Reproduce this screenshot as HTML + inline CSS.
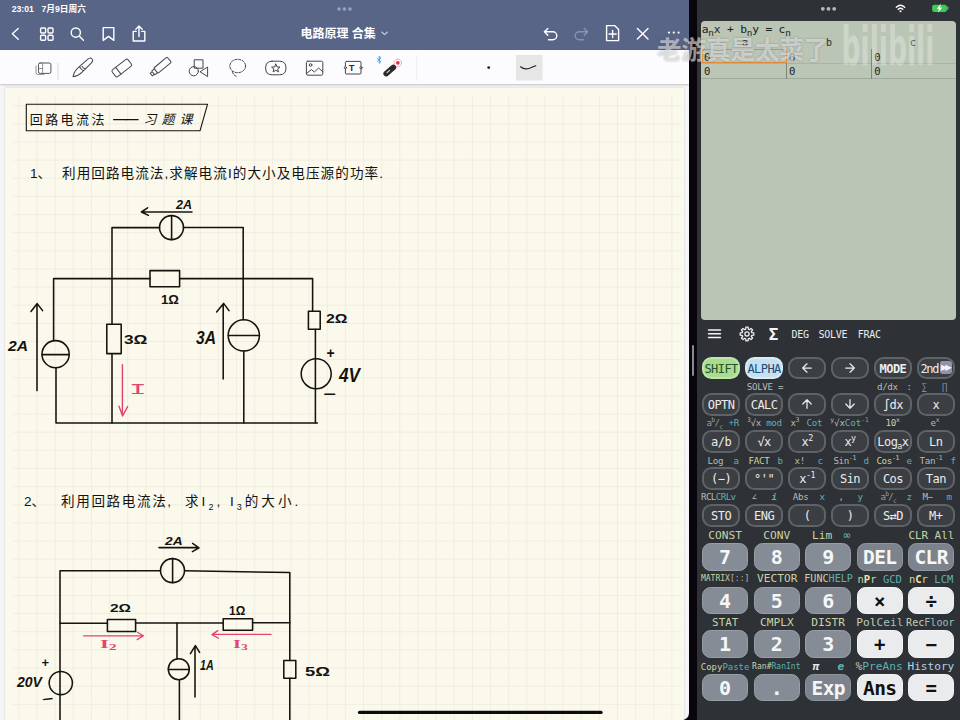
<!DOCTYPE html>
<html lang="zh"><head><meta charset="utf-8"><title>电路原理 合集</title>
<style>
*{box-sizing:border-box;margin:0;padding:0}
html,body{width:960px;height:720px;overflow:hidden;background:#08060c}
body{position:relative;font-family:"Liberation Sans","Noto Sans CJK SC",sans-serif}
.abs{position:absolute}
#left{position:absolute;left:0;top:0;width:689.3px;height:720px;background:#f6f5f8;overflow:hidden;border-bottom-right-radius:7px}
#hdr{position:absolute;left:0;top:0;width:100%;height:50.4px;background:#586587}
#tool{position:absolute;left:0;top:50.4px;width:100%;height:34.1px;background:#fcfbfd;box-shadow:0 1px 2px rgba(0,0,0,.22)}
#page{position:absolute;left:5px;top:88px;width:679px;height:640px;background:#fbf9ec;box-shadow:0 0 2px rgba(0,0,0,.18)}
#grid{position:absolute;left:8px;top:8px;width:668px;height:632px;
 background-image:linear-gradient(to right,#e7e4d6 1px,transparent 1px),linear-gradient(to bottom,#e7e4d6 1px,transparent 1px);
 background-size:18.15px 18.15px;background-position:5.4px 9.2px;opacity:.5}
.st{position:absolute;color:#fff;font-size:8.7px;font-weight:bold;line-height:10px;white-space:nowrap}
.hw{position:absolute;white-space:nowrap;color:#15130f;font-weight:400;font-family:"Liberation Sans","Noto Sans CJK SC",sans-serif;line-height:1}
#calc{position:absolute;left:696.5px;top:0;width:263.5px;height:720px;background:#2e3135;overflow:hidden;font-family:"DejaVu Sans Mono","Liberation Mono",monospace}
#disp{position:absolute;left:4px;top:21px;width:255px;height:299px;background:#bac5b5;border-radius:4px;overflow:hidden}
.k{position:absolute;height:22.5px;width:37.6px;border-radius:9.4px;background:#3b3f43;border:2px solid #5e6367;color:#ececec;
 font-size:12px;line-height:18.5px;padding-top:1px;text-align:center;letter-spacing:-.55px;white-space:nowrap}
.k sup,.k sub,.lb sup,.lb sub{font-size:70%;line-height:0}
.n{position:absolute;height:27.6px;width:46.2px;border-radius:8.6px;background:#858c96;border:1.5px solid #979ea7;color:#f6f6f6;
 font-size:20px;font-weight:bold;line-height:25px;padding-top:1.2px;text-align:center;white-space:nowrap}
.n.op{background:#e9ebec;border-color:#f3f4f5;color:#111}
.n.dk{background:#7c838c;border-color:#8f969e}
.lb{position:absolute;font-size:9.2px;line-height:10px;letter-spacing:-.35px;white-space:nowrap;color:#b9bcb8}
.lb2{position:absolute;font-size:10.2px;line-height:11px;letter-spacing:-.45px;white-space:nowrap;color:#c9d4a6}
.y{color:#c9d4a6}.c{color:#5fb0b3}.g{color:#b4b8b6}
</style></head>
<body>
<div id="left">
<div id="page"><div id="grid"></div></div>
<div id="hdr">
<div class="st" style="left:11.7px;top:4px">23:01</div><div class="st" style="left:41.5px;top:4px">7月9日周六</div>
<div class="abs" style="left:337px;top:6.8px;width:16px;height:4px"><svg style="display:block" width="16" height="4" viewBox="0 0 16 4"><circle cx="2" cy="2" r="1.8" fill="#98a1bd"/><circle cx="7.5" cy="2" r="1.8" fill="#98a1bd"/><circle cx="13" cy="2" r="1.8" fill="#98a1bd"/></svg></div>
<div class="abs" style="left:300.5px;top:26.1px;color:#fff;font-weight:bold;font-size:12px;line-height:16px;white-space:nowrap">电路原理 合集</div>
<svg class="abs" style="left:0;top:0" width="690" height="50" viewBox="0 0 690 50" fill="none" stroke="#fff" stroke-width="1.4" stroke-linecap="round" stroke-linejoin="round">
<path d="M18.2 28.4 L12.4 33.8 L18.2 39.2"/>
<rect x="40.6" y="28" width="5" height="5" rx="1"/><rect x="48" y="28" width="5" height="5" rx="1"/><rect x="40.6" y="35.2" width="5" height="5" rx="1"/><rect x="48" y="35.2" width="5" height="5" rx="1"/>
<circle cx="75.8" cy="32.6" r="4.6"/><path d="M79.2 36 L83.4 40.2"/>
<path d="M103.2 27.6 H113.8 V40.4 L108.5 36.4 L103.2 40.4 Z"/>
<path d="M136.2 31.4 H133.2 V41 H144.8 V31.4 H141.8 M139 36.5 V26.2 M135.8 29.2 L139 26 L142.2 29.2"/>
<path d="M381.8 32 L384.6 34.6 L387.4 32" stroke="#c9cfe0" stroke-width="1.1"/>
<path d="M547.8 28.4 L544.4 31.8 L547.8 35.2 M544.6 31.8 H552.8 A4 4 0 0 1 552.8 39.8 H548.5"/>
<path d="M584.2 28.4 L587.6 31.8 L584.2 35.2 M587.4 31.8 H579.2 A4 4 0 0 0 579.2 39.8 H583.5" stroke="#8992b2"/>
<path d="M606.6 25.6 H614.6 L618.6 29.6 V40.6 H606.6 Z M612.6 30.4 V37.6 M609 34 H616.2"/>
<path d="M637.4 28.4 L648 39 M648 28.4 L637.4 39"/>
<circle cx="669" cy="32.6" r="1.1" fill="#fff" stroke="none"/><circle cx="673.8" cy="32.6" r="1.1" fill="#fff" stroke="none"/><circle cx="678.6" cy="32.6" r="1.1" fill="#fff" stroke="none"/>
</svg>
</div>
<div id="tool">
<svg class="abs" style="left:0;top:0" width="690" height="35" viewBox="0 50 690 35" fill="none" stroke="#474747" stroke-width="1" stroke-linecap="round" stroke-linejoin="round">
<rect x="516" y="55" width="26.5" height="25.5" fill="#e6e6e6" stroke="none"/>
<path d="M58 63.5 V79" stroke="#dcdcdc"/><path d="M416.7 56 V80" stroke="#ececec"/>
<rect x="38.5" y="63" width="12.4" height="10.4" rx="1.6" stroke="#555"/><path d="M36 66 V72.5 Q36 74.4 38 74.4 H44 M42.6 63 V73.4 M38.5 68.5 H42.6" stroke="#777" stroke-width=".8"/>
<g transform="translate(82.5 67.7) rotate(-43.5)"><path d="M-13 0 Q-9 -3.2 -3 -3 L9.5 -2.6 Q13 -2.6 13 0 Q13 2.6 9.5 2.6 L-3 3 Q-9 3.2 -13 0 Z M-1.4 -3 Q-2.4 0 -1.4 3 M1 -2.95 Q0 0 1 2.95"/></g>
<g transform="translate(121.8 68) rotate(-38)"><rect x="-10" y="-4.3" width="20" height="8.6" rx="1.8"/><path d="M-4.4 -4.3 V4.3"/></g>
<g transform="translate(162 65.6) rotate(-40)"><rect x="-8" y="-3.4" width="17.4" height="6.8" rx="1"/><path d="M-8 -2.5 H-11.4 V2.5 H-8 M-11.4 -1.7 H-14 V1.7 H-11.4"/></g>
<rect x="194.6" y="59.8" width="8.4" height="8.4"/><circle cx="193.8" cy="71.2" r="4.6"/><path d="M207.6 67.4 V76.6 L200.4 72 Z"/>
<ellipse cx="237.7" cy="66" rx="7.9" ry="6.7" stroke-dasharray="2.4 1.5"/><path d="M232.4 71.6 Q232.6 74.6 237.4 77" stroke-dasharray="2.4 1.5"/>
<path d="M272 61.2 H279.6 Q286 61.2 286 68 Q286 74.8 279.6 74.8 H272 Q265.6 74.8 265.6 68 Q265.6 61.2 272 61.2 Z" /><path transform="translate(0 .9)" d="M275.8 63.2 L277 66 L280 66.2 L277.7 68.1 L278.5 71 L275.8 69.4 L273.1 71 L273.9 68.1 L271.6 66.2 L274.6 66 Z"/>
<rect x="306.4" y="61.2" width="16.4" height="14" rx="1.4"/><circle cx="310.6" cy="65" r="1.3"/><path d="M306.6 73.4 L311.4 69.6 L314.4 72 L318.6 68 L322.6 71.6"/>
<rect x="345.4" y="61.4" width="15.6" height="12.6" rx="1"/><circle cx="345.4" cy="67.7" r="1.1" fill="#fdfdfd"/><circle cx="361" cy="67.7" r="1.1" fill="#fdfdfd"/>
<circle cx="488.7" cy="67.6" r="1.4" fill="#222" stroke="none"/>
<path d="M520.6 66.8 Q524.6 70 529.6 68.2 Q533.6 66.6 535.8 65.8" stroke="#222" stroke-width="1.2"/>
<path d="M386.2 73.6 L393.4 67.4" stroke="#2a2a2a" stroke-width="5.6"/>
<path d="M387 72.6 L389.6 70.4" stroke="#ddd" stroke-width="1.1"/>
<circle cx="397.8" cy="62.8" r="1.9" fill="#e8304a" stroke="none"/><circle cx="397.8" cy="62.8" r="3.7" stroke="#f08a98" stroke-width=".9" stroke-dasharray="1.2 1.4"/>
<path d="M377.4 58.4 L381 61.6 L379.2 63.4 V56 L381 57.8 L377.4 61.2" stroke="#2a8cf0" stroke-width=".8"/>
</svg>
<div class="abs" style="left:348.8px;top:12.6px;font-size:9.5px;font-weight:bold;line-height:10px;color:#333">T</div>
</div>
<div class="hw" style="left:29.8px;top:112.6px;font-size:13px;letter-spacing:2.4px">回路电流法</div>
<div class="hw" style="left:113px;top:112.4px;font-size:13px;letter-spacing:-1px;font-weight:bold;transform:scaleX(1.02);transform-origin:left">——</div>
<div class="hw" style="left:143.6px;top:112.6px;font-size:13px;letter-spacing:5px;font-style:italic">习题课</div>
<div class="hw" style="left:30px;top:166.6px;font-size:13.6px;">1、</div>
<div class="hw" style="left:62px;top:166.6px;font-size:13.6px;letter-spacing:1.05px">利用回路电流法,求解电流I的大小及电压源的功率.</div>
<div class="hw" style="left:24px;top:494.6px;font-size:13.6px;">2、</div>
<div class="hw" style="left:61px;top:494.6px;font-size:13.6px;letter-spacing:1.6px">利用回路电流法,</div>
<div class="hw" style="left:185px;top:494.6px;font-size:13.6px;letter-spacing:3px">求I<sub style="font-size:9px">2</sub>, I<sub style="font-size:9px">3</sub>的大小.</div>
<div class="hw" style="left:176px;top:198.0px;font-size:13.0px;font-weight:bold;transform:scaleX(0.961);transform-origin:left top;font-style:italic;">2A</div>
<div class="hw" style="left:7.5px;top:338.2px;font-size:15.1px;font-weight:bold;transform:scaleX(1.037);transform-origin:left top;font-style:italic;">2A</div>
<div class="hw" style="left:161px;top:293.5px;font-size:12.3px;font-weight:bold;transform:scaleX(1.074);transform-origin:left top;">1Ω</div>
<div class="hw" style="left:124px;top:333.4px;font-size:13.7px;font-weight:bold;transform:scaleX(1.262);transform-origin:left top;">3Ω</div>
<div class="hw" style="left:196px;top:329.9px;font-size:17.8px;font-weight:bold;transform:scaleX(0.878);transform-origin:left top;font-style:italic;">3A</div>
<div class="hw" style="left:326px;top:312.4px;font-size:13.7px;font-weight:bold;transform:scaleX(1.154);transform-origin:left top;">2Ω</div>
<div class="hw" style="left:339px;top:365.7px;font-size:19.9px;font-weight:bold;transform:scaleX(0.863);transform-origin:left top;font-style:italic;">4V</div>
<div class="hw" style="left:165px;top:536.2px;font-size:11.0px;font-weight:bold;transform:scaleX(1.248);transform-origin:left top;font-style:italic;">2A</div>
<div class="hw" style="left:110px;top:603.2px;font-size:11.0px;font-weight:bold;transform:scaleX(1.409);transform-origin:left top;">2Ω</div>
<div class="hw" style="left:228.7px;top:604.5px;font-size:12.3px;font-weight:bold;transform:scaleX(0.972);transform-origin:left top;">1Ω</div>
<div class="hw" style="left:200px;top:657.2px;font-size:15.1px;font-weight:bold;transform:scaleX(0.710);transform-origin:left top;font-style:italic;">1A</div>
<div class="hw" style="left:305px;top:664.5px;font-size:13.0px;font-weight:bold;transform:scaleX(1.413);transform-origin:left top;">5Ω</div>
<div class="hw" style="left:16.7px;top:674.8px;font-size:14.4px;font-weight:bold;transform:scaleX(0.976);transform-origin:left top;font-style:italic;">20V</div>
<div class="hw" style="left:326.6px;top:345.6px;font-size:14px;font-weight:bold">+</div>
<div class="hw" style="left:323px;top:386.6px;font-size:14px;font-weight:bold;transform:scaleX(1.55);transform-origin:left">−</div>
<div class="hw" style="left:41.4px;top:656.4px;font-size:13px;font-weight:bold">+</div>
<div class="hw" style="left:41.7px;top:692.6px;font-size:13px;font-weight:bold;transform:scaleX(1.5) rotate(-10deg);transform-origin:left">−</div>
<div class="hw" style="left:129.4px;top:382.6px;font-size:15.5px;color:#e2446d;font-family:'Liberation Mono',monospace;font-weight:normal;transform:scaleX(1.9);transform-origin:left">I</div>
<div class="hw" style="left:99.5px;top:637.6px;font-size:12px;color:#e2446d;font-family:'Liberation Serif',serif;font-weight:bold;transform:scaleX(1.9);transform-origin:left">I<sub style="font-size:8px;vertical-align:-2px">2</sub></div>
<div class="hw" style="left:232.5px;top:637.6px;font-size:12px;color:#e2446d;font-family:'Liberation Serif',serif;font-weight:bold;transform:scaleX(1.7);transform-origin:left">I<sub style="font-size:8px;vertical-align:-2px">3</sub></div>
<svg class="abs" style="left:0;top:0" width="690" height="720" viewBox="0 0 690 720" fill="none" stroke="#16130f" stroke-width="1.55" stroke-linecap="round" stroke-linejoin="round">
<path d="M26.3 104.3 H207.5 L200 130.8 H26.3 Z" stroke-width="1.1"/>
<!-- circuit 1 -->
<path d="M112 423 V227.6 H159.6 M183.4 227.4 H243.2 V319.6 M243.8 351 V423"/>
<circle cx="171.5" cy="227.6" r="12"/><path d="M171.6 215.6 V239.6"/>
<path d="M53.6 340.4 V278.6 H150 M179.6 278.6 H312.6 V311.2 M315.4 329.2 V423.2 M56 367.8 V423 H317.4"/>
<rect x="150" y="270.6" width="29.6" height="16.2"/>
<rect x="106.8" y="324.2" width="14.4" height="29.4" fill="#fbf9ec"/>
<rect x="308.4" y="311.2" width="11.8" height="18" />
<circle cx="55.6" cy="354.2" r="13.6"/><path d="M42 354.6 H69.2"/>
<circle cx="243.8" cy="335.4" r="15.6"/><path d="M228.4 335.4 H259.4"/>
<circle cx="316.2" cy="373.8" r="15"/>
<path d="M37 390.6 V304 M31 311.4 L37.2 303.6 L42.6 310.6"/>
<path d="M223.2 379 V304 M216.6 312 L223.6 303.4 L229 310.6"/>
<path d="M192 212 H142 M147.6 207.8 L141.4 212 L148.4 215.4"/>
<path d="M122.4 364.6 V415.4 M119 406.2 L122.6 416 L127.6 406.6" stroke="#e2446d" stroke-width="1.4"/>
<!-- circuit 2 -->
<path d="M60 720 V570.8 H160.4 M184.6 570.8 L289.8 572.6 V660.4 M289.8 678.2 V720"/>
<circle cx="172.5" cy="570.6" r="12"/><path d="M172.6 558.6 V582.6"/>
<path d="M60 623.2 H107.4 M135.6 623 H223.2 M252.6 622.8 H290"/>
<rect x="107.4" y="619.4" width="28.2" height="12"/>
<rect x="223.2" y="618.8" width="29.4" height="11.4"/>
<rect x="283.8" y="660.4" width="12" height="17.8"/>
<path d="M177 623 V658.8 M179.4 679.8 V720"/>
<circle cx="178.8" cy="669.2" r="10.5"/><path d="M168.4 669.4 H189.2"/>
<circle cx="60.8" cy="683" r="11.6"/>
<path d="M195 697 V646.4 M190.4 653.6 L195.4 645.6 L199.6 652.4"/>
<path d="M159 547.6 H198.6 M192.6 543.4 L199 547.8 L192.4 551.6"/>
<path d="M83.6 635.8 H143 M137.4 632.2 L143.4 635.8 L137.2 639.6" stroke="#e2446d" stroke-width="1.3"/>
<path d="M271 634.4 H212.4 M217.8 630.6 L212 634.6 L218.4 638.2" stroke="#e2446d" stroke-width="1.3"/>
<path d="M359.6 712.4 H601" stroke="#0b0b0b" stroke-width="3.4"/>
</svg>
</div>
<div class="abs" style="left:691.6px;top:345px;width:2.6px;height:31px;border-radius:2px;background:#8a8a8e"></div>
<div id="calc">
<svg class="abs" style="left:0;top:0" width="264" height="20" viewBox="696.5 0 264 20">
<circle cx="822.3" cy="8.8" r="1.9" fill="#b4b7bd"/><circle cx="828" cy="8.8" r="1.9" fill="#b4b7bd"/><circle cx="833.7" cy="8.8" r="1.9" fill="#b4b7bd"/>
<g fill="none" stroke="#fff" stroke-width="1.35" stroke-linecap="round"><path d="M895.8 7.2 Q900 3.4 904.2 7.2"/><path d="M897.7 9.3 Q900 7.3 902.3 9.3"/></g><circle cx="900" cy="11.2" r="1" fill="#fff"/>
<rect x="931.6" y="4.8" width="14.8" height="7.2" rx="2.2" fill="#3ec95b"/><rect x="946.6" y="6.6" width="1.3" height="3.2" rx=".6" fill="#8d9094"/>
<path d="M940.4 3.8 L936.2 8.8 H938.6 L937.4 12.8 L941.8 7.6 H939.4 Z" fill="#fff"/>
</svg>
<div id="disp">
<div class="abs" style="left:0;top:28px;width:255px;height:14.2px;background:#bbc5b6"></div><div class="abs" style="left:0;top:42.2px;width:255px;height:15.4px;background:#bcc6b6;border-bottom:1px solid #a0aa9c;border-top:1px solid #aab4a5"></div>
<div class="abs" style="left:85.4px;top:28px;width:1px;height:30px;background:#7b8578"></div><div class="abs" style="left:170.6px;top:28px;width:1px;height:30px;background:#7b8578"></div>
<div class="abs" style="left:1.8px;top:28px;width:84.4px;height:14.4px;border:1.4px solid #e28b36"></div>
<div class="abs" style="left:1.2px;top:2px;font-size:11.3px;line-height:14px;color:#1d211c;white-space:nowrap;letter-spacing:-.2px">a<sub style="font-size:9.4px;line-height:0;vertical-align:-2.6px">n</sub>x + b<sub style="font-size:9.4px;line-height:0;vertical-align:-2.6px">n</sub>y = c<sub style="font-size:9.4px;line-height:0;vertical-align:-2.6px">n</sub></div>
<div class="abs" style="left:41.4px;top:16.4px;font-size:10px;line-height:11px;color:#2a2f29">a</div><div class="abs" style="left:125.6px;top:16.4px;font-size:10px;line-height:11px;color:#2a2f29">b</div><div class="abs" style="left:209.2px;top:16.4px;font-size:10px;line-height:11px;color:#2a2f29">c</div>
<div class="abs" style="left:3.6px;top:29.6px;font-size:10.6px;line-height:12px;color:#1d211c">0</div><div class="abs" style="left:88.6px;top:29.6px;font-size:10.6px;line-height:12px;color:#1d211c">0</div><div class="abs" style="left:173.8px;top:29.6px;font-size:10.6px;line-height:12px;color:#1d211c">0</div><div class="abs" style="left:3.6px;top:44.2px;font-size:10.6px;line-height:12px;color:#1d211c">0</div><div class="abs" style="left:88.6px;top:44.2px;font-size:10.6px;line-height:12px;color:#1d211c">0</div><div class="abs" style="left:173.8px;top:44.2px;font-size:10.6px;line-height:12px;color:#1d211c">0</div>
</div>
<svg class="abs" style="left:0;top:322px" width="264" height="26" viewBox="696.5 322 264 26" fill="none" stroke="#f2f2f2" stroke-linecap="round">
<path d="M708 330.1 H720 M708 333.8 H720 M708 337.5 H720" stroke-width="1.5"/>
<path stroke-width="1.25" stroke-linejoin="round" d="M745.22 329.17 L745.37 327.19 L747.63 327.19 L747.78 329.17 L749.01 329.68 L750.51 328.39 L752.11 329.99 L750.82 331.49 L751.33 332.72 L753.31 332.87 L753.31 335.13 L751.33 335.28 L750.82 336.51 L752.11 338.01 L750.51 339.61 L749.01 338.32 L747.78 338.83 L747.63 340.81 L745.37 340.81 L745.22 338.83 L743.99 338.32 L742.49 339.61 L740.89 338.01 L742.18 336.51 L741.67 335.28 L739.69 335.13 L739.69 332.87 L741.67 332.72 L742.18 331.49 L740.89 329.99 L742.49 328.39 L743.99 329.68 Z"/><circle cx="746.5" cy="334" r="2.1" stroke-width="1.25"/>
</svg>
<div class="abs" style="left:72.2px;top:326.4px;font-size:16px;font-weight:bold;line-height:17px;color:#f4f4f4">Σ</div>
<div class="abs" style="left:95.1px;top:328.6px;font-size:10px;line-height:11px;letter-spacing:-.3px;color:#ededed">DEG</div><div class="abs" style="left:122.1px;top:328.6px;font-size:10px;line-height:11px;letter-spacing:-.3px;color:#ededed">SOLVE</div><div class="abs" style="left:161.3px;top:328.6px;font-size:10px;line-height:11px;letter-spacing:-.3px;color:#ededed">FRAC</div>
<div class="k" style="left:5.8px;top:356.6px;background:#a9dc8f;border-color:#bfe6aa;color:#27512a;">SHIFT</div><div class="k" style="left:48.8px;top:356.6px;background:#c6e0f2;border-color:#d9ebf7;color:#1c4b73;">ALPHA</div><div class="k" style="left:91.8px;top:356.6px;padding-top:0;"><svg style="display:block;margin:3.3px auto 0" width="12" height="12" viewBox="-6 -6 12 12" fill="none" stroke="#ececec" stroke-width="1.25" stroke-linecap="round" stroke-linejoin="round"><g transform="rotate(0)"><path d="M-4.2 0 H4.3 M0 -4.2 L-4.3 0 L0 4.2"/></g></svg></div><div class="k" style="left:134.7px;top:356.6px;padding-top:0;"><svg style="display:block;margin:3.3px auto 0" width="12" height="12" viewBox="-6 -6 12 12" fill="none" stroke="#ececec" stroke-width="1.25" stroke-linecap="round" stroke-linejoin="round"><g transform="rotate(180)"><path d="M-4.2 0 H4.3 M0 -4.2 L-4.3 0 L0 4.2"/></g></svg></div><div class="k" style="left:177.6px;top:356.6px;font-weight:bold;">MODE</div><div class="k" style="left:220.5px;top:356.6px;letter-spacing:-1.25px;text-align:left;padding-left:1.4px;">2nd<span style="position:absolute;right:.2px;top:2.4px;width:12.5px;height:12.8px;border-radius:2.4px;background:#8b96ad;color:#f2f5f9;font-size:8.4px;line-height:12.8px;letter-spacing:-2px;text-indent:-1.6px;text-align:center;font-family:DejaVu Sans,sans-serif">▶▶</span></div>
<div class="k" style="left:5.8px;top:393.2px;">OPTN</div><div class="k" style="left:48.8px;top:393.2px;">CALC</div><div class="k" style="left:91.8px;top:393.2px;padding-top:0;"><svg style="display:block;margin:3.3px auto 0" width="12" height="12" viewBox="-6 -6 12 12" fill="none" stroke="#ececec" stroke-width="1.25" stroke-linecap="round" stroke-linejoin="round"><g transform="rotate(90)"><path d="M-4.2 0 H4.3 M0 -4.2 L-4.3 0 L0 4.2"/></g></svg></div><div class="k" style="left:134.7px;top:393.2px;padding-top:0;"><svg style="display:block;margin:3.3px auto 0" width="12" height="12" viewBox="-6 -6 12 12" fill="none" stroke="#ececec" stroke-width="1.25" stroke-linecap="round" stroke-linejoin="round"><g transform="rotate(270)"><path d="M-4.2 0 H4.3 M0 -4.2 L-4.3 0 L0 4.2"/></g></svg></div><div class="k" style="left:177.6px;top:393.2px;">∫dx</div><div class="k" style="left:220.5px;top:393.2px;">x</div>
<div class="k" style="left:5.8px;top:430.0px;">a/b</div><div class="k" style="left:48.8px;top:430.0px;">√x</div><div class="k" style="left:91.8px;top:430.0px;">x<sup>2</sup></div><div class="k" style="left:134.7px;top:430.0px;">x<sup>y</sup></div><div class="k" style="left:177.6px;top:430.0px;">Log<sub>a</sub>x</div><div class="k" style="left:220.5px;top:430.0px;">Ln</div>
<div class="k" style="left:5.8px;top:467.2px;">(−)</div><div class="k" style="left:48.8px;top:467.2px;">°'"</div><div class="k" style="left:91.8px;top:467.2px;">x<sup>-1</sup></div><div class="k" style="left:134.7px;top:467.2px;">Sin</div><div class="k" style="left:177.6px;top:467.2px;">Cos</div><div class="k" style="left:220.5px;top:467.2px;">Tan</div>
<div class="k" style="left:5.8px;top:504.0px;">STO</div><div class="k" style="left:48.8px;top:504.0px;">ENG</div><div class="k" style="left:91.8px;top:504.0px;">(</div><div class="k" style="left:134.7px;top:504.0px;">)</div><div class="k" style="left:177.6px;top:504.0px;">S⇄D</div><div class="k" style="left:220.5px;top:504.0px;">M+</div>
<div class="lb" style="left:50.3px;top:381.6px;">SOLVE =</div><div class="lb" style="left:180.5px;top:381.6px;">d/dx</div><div class="lb" style="left:210.1px;top:381.6px;">:</div><div class="lb" style="left:225.1px;top:381.6px;"><span style="color:#93a3b5">∑</span></div><div class="lb" style="left:245.3px;top:381.6px;"><span style="color:#93a3b5">∏</span></div>
<div class="lb" style="left:10.1px;top:418.4px;color:#9a9e9c;letter-spacing:-.8px">a<sup>b</sup>/<sub>c</sub></div><div class="lb" style="left:32.1px;top:418.4px;"><span class="c">+R</span></div><div class="lb" style="left:50.5px;top:418.4px;"><sup>3</sup>√x</div><div class="lb" style="left:69.7px;top:418.4px;"><span class="c">mod</span></div><div class="lb" style="left:93.9px;top:418.4px;">x<sup>3</sup></div><div class="lb" style="left:110.1px;top:418.4px;"><span class="c">Cot</span></div><div class="lb" style="left:133.7px;top:418.4px;letter-spacing:-.1px"><sup>y</sup>√x<span class="c">Cot<sup>-1</sup></span></div><div class="lb" style="left:189.1px;top:418.4px;"><span class="y">10<sup>x</sup></span></div><div class="lb" style="left:234.1px;top:418.4px;">e<sup>x</sup></div>
<div class="lb" style="left:11.1px;top:455.6px;">Log</div><div class="lb" style="left:36.9px;top:455.6px;"><span class="c">a</span></div><div class="lb" style="left:52.1px;top:455.6px;"><span class="y">FACT</span></div><div class="lb" style="left:81.1px;top:455.6px;"><span class="c">b</span></div><div class="lb" style="left:98.1px;top:455.6px;">x!</div><div class="lb" style="left:121.1px;top:455.6px;"><span class="c">c</span></div><div class="lb" style="left:136.9px;top:455.6px;">Sin<sup>-1</sup></div><div class="lb" style="left:167.1px;top:455.6px;"><span class="c">d</span></div><div class="lb" style="left:179.9px;top:455.6px;"><span class="y">Cos<sup>-1</sup></span></div><div class="lb" style="left:210.1px;top:455.6px;"><span class="c">e</span></div><div class="lb" style="left:223.1px;top:455.6px;">Tan<sup>-1</sup></div><div class="lb" style="left:253.9px;top:455.6px;"><span class="c">f</span></div>
<div class="lb" style="left:4.5px;top:492.4px;letter-spacing:-.6px">RCL<span class="c">CRLv</span></div><div class="lb" style="left:55.1px;top:492.4px;">∠</div><div class="lb" style="left:75.1px;top:492.4px;"><span class="c"><b><i>i</i></b></span></div><div class="lb" style="left:96.3px;top:492.4px;">Abs</div><div class="lb" style="left:123.1px;top:492.4px;"><span class="c">x</span></div><div class="lb" style="left:141.9px;top:492.4px;">,</div><div class="lb" style="left:161.1px;top:492.4px;"><span class="c">y</span></div><div class="lb" style="left:183.9px;top:492.4px;color:#9a9e9c;letter-spacing:-.8px">a<sup>b</sup>/<sub>c</sub></div><div class="lb" style="left:210.1px;top:492.4px;"><span class="c">z</span></div><div class="lb" style="left:225.9px;top:492.4px;">M−</div><div class="lb" style="left:249.9px;top:492.4px;"><span class="c">m</span></div>
<div class="n" style="left:5.5px;top:543.2px;">7</div><div class="n" style="left:57.1px;top:543.2px;">8</div><div class="n" style="left:108.7px;top:543.2px;">9</div><div class="n dk" style="left:160.2px;top:543.2px;font-size:19.5px;letter-spacing:-.6px;">DEL</div><div class="n dk" style="left:211.6px;top:543.2px;font-size:19.5px;letter-spacing:-.6px;">CLR</div>
<div class="n" style="left:5.5px;top:586.6px;">4</div><div class="n" style="left:57.1px;top:586.6px;">5</div><div class="n" style="left:108.7px;top:586.6px;">6</div><div class="n op" style="left:160.2px;top:586.6px;font-size:19px;">×</div><div class="n op" style="left:211.6px;top:586.6px;font-size:19px;">÷</div>
<div class="n" style="left:5.5px;top:630.2px;">1</div><div class="n" style="left:57.1px;top:630.2px;">2</div><div class="n" style="left:108.7px;top:630.2px;">3</div><div class="n op" style="left:160.2px;top:630.2px;font-size:19px;">+</div><div class="n op" style="left:211.6px;top:630.2px;font-size:19px;">−</div>
<div class="n" style="left:5.5px;top:673.8px;">0</div><div class="n" style="left:57.1px;top:673.8px;">.</div><div class="n dk" style="left:108.7px;top:673.8px;font-size:19.5px;letter-spacing:-.6px;">Exp</div><div class="n op" style="left:160.2px;top:673.8px;font-size:19.5px;letter-spacing:-.6px;">Ans</div><div class="n op" style="left:211.6px;top:673.8px;font-size:19px;">=</div>
<div class="lb2" style="left:11.8px;top:529.7px;font-size:11.20px;line-height:12px;letter-spacing:0;">CONST</div><div class="lb2" style="left:66.8px;top:529.7px;font-size:11.20px;line-height:12px;letter-spacing:0;">CONV</div><div class="lb2" style="left:115.5px;top:529.7px;font-size:11.20px;line-height:12px;letter-spacing:0;">Lim</div><div class="lb2" style="left:146.9px;top:529.7px;font-size:11.20px;line-height:12px;letter-spacing:0;"><span class="c">∞</span></div><div class="lb2" style="left:211.9px;top:529.7px;font-size:10.89px;line-height:12px;letter-spacing:0;">CLR All</div>
<div class="lb2" style="left:4.4px;top:572.7px;font-size:8.06px;line-height:12px;letter-spacing:0;">MATRIX<span class="g">[::]</span></div><div class="lb2" style="left:60.6px;top:572.7px;font-size:11.16px;line-height:12px;letter-spacing:0;">VECTOR</div><div class="lb2" style="left:107.8px;top:572.7px;font-size:10.09px;line-height:12px;letter-spacing:0;">FUNC<span class="c">HELP</span></div><div class="lb2" style="left:161.0px;top:572.7px;font-size:10.55px;line-height:12px;letter-spacing:0;">n<b style="color:#ece4a8">P</b>r <span class="c">GCD</span></div><div class="lb2" style="left:212.4px;top:572.7px;font-size:10.55px;line-height:12px;letter-spacing:0;">n<b style="color:#ece4a8">C</b>r <span class="c">LCM</span></div>
<div class="lb2" style="left:15.6px;top:617.3px;font-size:10.87px;line-height:12px;letter-spacing:0;">STAT</div><div class="lb2" style="left:63.5px;top:617.3px;font-size:11.20px;line-height:12px;letter-spacing:0;">CMPLX</div><div class="lb2" style="left:114.7px;top:617.3px;font-size:11.20px;line-height:12px;letter-spacing:0;">DISTR</div><div class="lb2" style="left:159.8px;top:617.3px;font-size:11.20px;line-height:12px;letter-spacing:0;"><span style="color:#c8cdb4">Pol</span><span style="color:#9cc3c0">Ceil</span></div><div class="lb2" style="left:209.6px;top:617.3px;font-size:10.09px;line-height:12px;letter-spacing:0;"><span style="color:#c8cdb4">Rec</span><span style="color:#9cc3c0">Floor</span></div>
<div class="lb2" style="left:4.3px;top:660.9px;font-size:8.97px;line-height:12px;letter-spacing:0;">Copy<span class="c">Paste</span></div><div class="lb2" style="left:55.6px;top:660.9px;font-size:8.05px;line-height:12px;letter-spacing:0;">Ran#<span class="c">RanInt</span></div><div class="lb2" style="left:116.3px;top:660.9px;font-size:11.20px;line-height:12px;letter-spacing:0;color:#e8e8e8"><b><i>π</i></b></div><div class="lb2" style="left:141.0px;top:660.9px;font-size:11.20px;line-height:12px;letter-spacing:0;"><span class="c"><b><i>e</i></b></span></div><div class="lb2" style="left:159.0px;top:660.9px;font-size:11.20px;line-height:12px;letter-spacing:0;">%<span class="c">PreAns</span></div><div class="lb2" style="left:211.0px;top:660.9px;font-size:11.10px;line-height:12px;letter-spacing:0;color:#b4d0e8">History</div>
</div>
<div class="abs" style="left:657px;top:34px;font-size:24.5px;line-height:34px;font-weight:bold;white-space:nowrap;color:rgba(255,255,255,.55);text-shadow:0 0 2px rgba(60,60,60,.4)">老游真是太菜了</div>
<div class="abs" style="left:841.5px;top:20.4px;font-size:29.6px;line-height:30px;font-weight:bold;white-space:nowrap;color:rgba(255,255,255,.3);font-family:'DejaVu Sans Condensed','DejaVu Sans','Liberation Sans',sans-serif;font-stretch:condensed;transform:scaleY(1.78);transform-origin:left top">bilibili</div>
</body></html>
